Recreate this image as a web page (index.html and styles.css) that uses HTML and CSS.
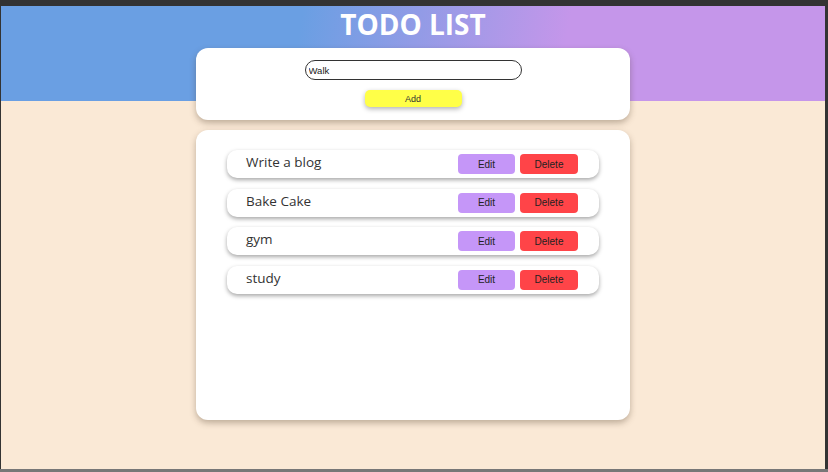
FILE: index.html
```html
<!DOCTYPE html>
<html>
<head>
<meta charset="utf-8">
<link rel="stylesheet" href="styles.css">
</head>
<body>
<div class="window">
  <div class="app">
    <h1 class="title">TODO LIST</h1>
    <div class="card form-card">
      <input class="todo-input" type="text" value="Walk">
      <button class="add-btn">Add</button>
    </div>
    <div class="card list-card">
      <div class="item"><span class="item-text">Write a blog</span><div class="actions"><button class="btn edit">Edit</button><button class="btn delete">Delete</button></div></div>
      <div class="item"><span class="item-text">Bake Cake</span><div class="actions"><button class="btn edit">Edit</button><button class="btn delete">Delete</button></div></div>
      <div class="item"><span class="item-text">gym</span><div class="actions"><button class="btn edit">Edit</button><button class="btn delete">Delete</button></div></div>
      <div class="item"><span class="item-text">study</span><div class="actions"><button class="btn edit">Edit</button><button class="btn delete">Delete</button></div></div>
    </div>
  </div>
  <div class="bottom-bar"></div>
</div>
</body>
</html>
```
FILE: styles.css
```css
html, body {
  margin: 0;
  padding: 0;
  height: 472px;
  overflow: hidden;
  background: #333333;
}
.window {
  padding: 6px 0 0 0;
}
.app {
  margin: 0 3px 0 1px;
  height: 463px;
  box-sizing: border-box;
  background-color: #fae9d6;
  background-image: linear-gradient(100deg, #6a9fe3 0%, #6a9fe3 36%, #c596ea 68%, #c596ea 100%);
  background-size: 100% 95px;
  background-repeat: no-repeat;
  display: flex;
  flex-direction: column;
  align-items: center;
  overflow: hidden;
}
.title {
  margin: 0;
  font-family: "Open Sans", "Noto Sans", sans-serif;
  font-weight: 700;
  font-size: 28px;
  line-height: 36px;
  color: #ffffff;
  letter-spacing: 0;
}
.card {
  width: 434px;
  box-sizing: border-box;
  background: #ffffff;
  border-radius: 12px;
  box-shadow: 0 3px 6px rgba(80, 60, 40, 0.35);
}
.form-card {
  margin-top: 6px;
  height: 72px;
  padding-top: 12px;
  display: flex;
  flex-direction: column;
  align-items: center;
}
.todo-input {
  width: 217px;
  height: 20px;
  box-sizing: border-box;
  border: 1.5px solid #333;
  border-radius: 10px;
  padding: 0 3px;
  font-family: "Liberation Sans", Arial, sans-serif;
  font-size: 9.5px;
  color: #222;
  outline: none;
  background: #fff;
}
.add-btn {
  margin-top: 10px;
  width: 97px;
  height: 17px;
  border: none;
  border-radius: 5px;
  background: #ffff48;
  box-shadow: 0 2px 5px rgba(0, 0, 0, 0.3);
  font-family: "Liberation Sans", Arial, sans-serif;
  font-size: 9px;
  color: #333;
  padding: 0;
}
.list-card {
  margin-top: 10px;
  height: 290px;
  padding: 20px 31px;
  display: flex;
  flex-direction: column;
  gap: 10.5px;
}
.item {
  height: 28px;
  border-radius: 10px;
  background: #fff;
  box-shadow: 0 2px 4px rgba(0, 0, 0, 0.35);
  display: flex;
  align-items: center;
  justify-content: space-between;
  padding: 0 21px 0 19px;
}
.item-text {
  font-family: "Open Sans", "Noto Sans", sans-serif;
  font-size: 13.5px;
  color: #333;
  margin-top: -4px;
}
.actions {
  display: flex;
  gap: 5px;
}
.btn {
  height: 20px;
  border: none;
  border-radius: 4px;
  padding: 0;
  font-family: "Liberation Sans", Arial, sans-serif;
  font-size: 10px;
  color: #222;
}
.edit {
  width: 57px;
  background: #c596f8;
}
.delete {
  width: 58px;
  background: #ff4448;
}
.bottom-bar {
  height: 3px;
  background: #777777;
}
```
